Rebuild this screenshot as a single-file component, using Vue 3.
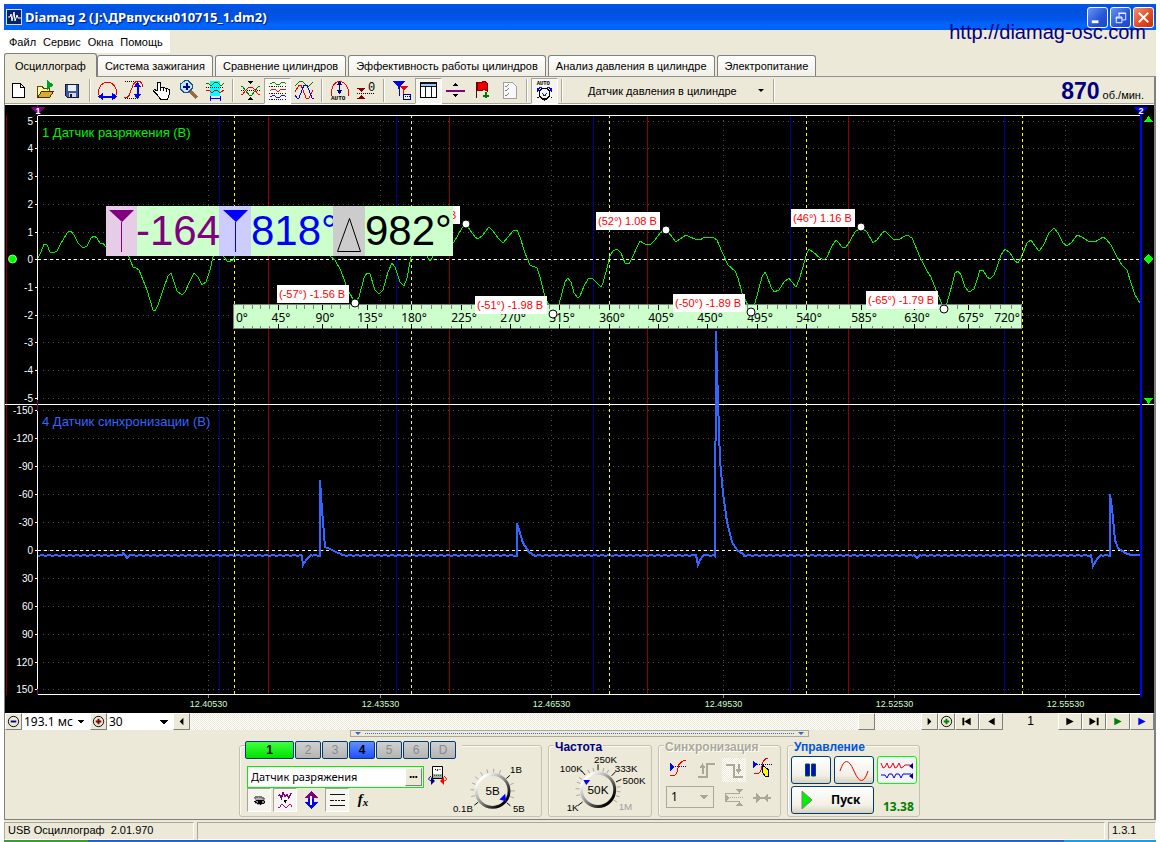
<script setup>
import { ref } from 'vue'

const menu = ['Файл', 'Сервис', 'Окна', 'Помощь']
const tabs = [
  'Осциллограф',
  'Система зажигания',
  'Сравнение цилиндров',
  'Эффективность работы цилиндров',
  'Анализ давления в цилиндре',
  'Электропитание',
]
const activeTab = ref(0)
const sensorName = ref('Датчик разряжения')

const R = '#f00000'
const B = '#0000f0'
const G = '#007800'
const K = '#000'
const M = '#800000'
const P = '#800080'
const s = (d, stroke, extra = {}) => ({ d, stroke, fill: 'none', ...extra })
const f = (d, fill, extra = {}) => ({ d, fill, ...extra })
const dots = { 'stroke-dasharray': '1 1' }

const icons = {
  new: [f('M7.500 5.500h8l4 4v10h-12z', '#fff', { stroke: K }), s('M15.500 5.500v4h4', K)],
  open: [
    f('M5.500 19.500v-11h5l1 2h6v3', '#fff7a0', { stroke: '#5a4a00' }),
    f('M5.500 19.500l4-6h12l-4 6z', '#e0a830', { stroke: '#3a3000' }),
    s('M15.500 4v8', K),
    f('M15 2l7 5-7 5z', '#00a020'),
  ],
  save: [
    f('M6.500 6.500h13v13h-11l-2-2z', '#3a5a9a', { stroke: '#101840' }),
    f('M9 7h8v6h-8z', '#e8f0ff'),
    f('M10 15h7v4h-7z', '#d8d8d8'),
    f('M11 16h2v3h-2z', '#101840'),
  ],
  widthFit: [
    s('M4.500 17v-4q1-7 8-9h2q7 2 8 9v4', R),
    s('M6 18.500h15', B, { 'stroke-width': 2 }),
    f('M4 18.500l5-4v8zM23 18.500l-5-4v8z', B),
  ],
  heightFit: [
    s('M4 3.500h12M4 20.500h12', K, dots),
    s('M3 20q5 0 6-5l3-8q2-4 6-4 3 1 4 6', R),
    s('M16.500 6v12', B, { 'stroke-width': 2 }),
    f('M16.500 4l4 5h-8zM16.500 21l4-5h-8z', B),
  ],
  hand: [
    f('M9.500 12V4.500h3V10q1-2 3 0 1-1 3 1 1-1 3 1v4l-2 5h-7l-4-5-3-3q0-2 2-1z', '#fff', { stroke: K }),
    s('M12.500 10v3M15.500 10v3M18.500 11v3', K),
  ],
  zoom: [
    s('M15 13l7 7', '#9a6a40', { 'stroke-width': 3 }),
    f('M10 2.500h3l4 4v4l-4 4h-4l-4-4v-4z', '#b8e8ff', { stroke: '#205080' }),
    s('M8 8.500h7M11.500 5v7', '#000080', { 'stroke-width': 2 }),
  ],
  span: [
    f('M8 3h10v15h-10z', '#00ffff'),
    s('M4 5h2l2 2h2l3-3h2l3 3h2l2-2', G),
    s('M4 9.500h18', K, dots),
    s('M4 12h3l2 2h2l2-2h2l2 2h2l3-2', R),
    s('M9 20.500h9M8.500 18v5M18.500 18v5', B),
  ],
  cross: [
    s('M4 12.500h19', K, dots),
    s('M4 8l2 1 3 4 3 4h3l3-4 3-4 2-1', G),
    s('M4 17l2-1 3-4 3-3h3l3 3 3 4 2 1', R),
    f('M13.500 6l-3-3h6zM13.500 19l-3 3h6z', K),
  ],
  split: [
    s('M5 6l3-2h2l3 2h2l3-2h2l3 2', G),
    s('M4 8.500h19M4 15.500h19M4 22.500h19', K, dots),
    s('M5 13l3-2h2l3 2h2l3-2h2l3 2', R),
    s('M5 20l3-2h2l3 2h2l3-2h2l3 2', B),
  ],
  overlay: [
    s('M4 8l5-5h2l5 5h2l4-4', G),
    s('M4 14l4-7h2l5 13h3l4-8', R),
    s('M4 17l2 3h2l5-13h3l5 13h2', B),
  ],
  auto: [
    s('M5.500 18v-5q1-7 7-10h2q7 3 8 10v5', R),
    s('M13.500 5v9', '#000080'),
    f('M13.500 3l3 4h-6zM13.500 16l3-4h-6z', '#000080'),
    { t: 'AUTO', x: 5, y: 22, size: 6, w: 'bold' },
  ],
  zero: [
    s('M4 15.500h18', K, dots),
    s('M4 10.500h8M4 20.500h8', M),
    f('M4 10h8l-4 4zM4 21h8l-4-4z', M),
    { t: '0', x: 15, y: 13, size: 12, w: 'normal' },
  ],
  cursors: [
    f('M4 3h13l-5 5v3h-2v-3z', B),
    s('M11.500 8v10', B),
    f('M11 8h9l-4 4z', R),
    s('M15.500 9v11', R),
    f('M15.500 16.500h7v5h-7z', '#e8f0ff', { stroke: '#000080' }),
    s('M17 18.500h5', '#000080', dots),
  ],
  table: [
    f('M4.500 4.500h18v15h-18z', '#fff', { stroke: K }),
    f('M5 5h17v3h-17z', '#a0c8ff'),
    s('M4 8.500h18M10.500 8v11M16.500 8v11M4.500 4v16h18v-16z', K),
  ],
  level: [s('M4 12.500h19', P, { 'stroke-width': 2 }), f('M13.500 5l3 3h-6zM13.500 19l3-3h-6z', K)],
  flag: [
    s('M7.500 4v16', '#600000', { 'stroke-width': 1 }),
    f('M8 4l4 1 3-2 3 2v8l-3-2-3 2-4-1z', '#f00000', { stroke: M }),
    s('M16.500 14v6M13.500 17.500h6', G, { 'stroke-width': 2 }),
  ],
  check: [
    f('M7.500 4.500h9l4 4v12h-13z', '#f8f8f8', { stroke: '#a0a0a0' }),
    s('M9 8l1 1 3-3M9 12l1 1 3-3M9 17l1 1 3-3', '#808080'),
  ],
  autoDial: [
    { t: 'AUTO', x: 5, y: 7, size: 6, w: 'bold' },
    s('M6 11q2-3 5-2M21 11q-2-3-5-2', B),
    f('M5 10h4l-3 4zM22 10h-4l3 4z', B),
    f('M11 10.500h5l3 3v5l-3 3h-5l-3-3v-5z', '#f4f4ff', { stroke: K, 'stroke-width': 1.5 }),
    s('M11 15l2 3h1l2-3', B),
    s('M7 20l-2 1M20 20l2 1M13.500 22v2', K),
  ],
}

const toolbar = [
  { n: 'new', l: 'Новый' }, { n: 'open', l: 'Открыть' }, { n: 'save', l: 'Сохранить' }, null,
  { n: 'widthFit', l: 'Ширина' }, { n: 'heightFit', l: 'Высота' }, { n: 'hand', l: 'Сдвиг' },
  { n: 'zoom', l: 'Увеличить' }, { n: 'span', l: 'Участок' }, null,
  { n: 'cross', l: 'Совместить нули' }, { n: 'split', l: 'Разделить', on: true }, { n: 'overlay', l: 'Наложить' }, null,
  { n: 'auto', l: 'Автомасштаб' }, { n: 'zero', l: 'Ноль' }, null,
  { n: 'cursors', l: 'Курсоры' }, { n: 'table', l: 'Таблица', on: true }, { n: 'level', l: 'Уровень' },
  { n: 'flag', l: 'Метка' }, { n: 'check', l: 'Список' }, null,
  { n: 'autoDial', l: 'Автодиапазон', on: true }, null,
]

// Plot geometry
const upperTicks = [5, 4, 3, 2, 1, 0, -1, -2, -3, -4, -5].map((v) => ({ v, y: Math.round(259.200 - v * 27.700) + 0.5 }))
const lowerTicks = [-150, -120, -90, -60, -30, 0, 30, 60, 90, 120, 150].map((v) => ({ v, y: Math.round(549.900 + v * 0.930) + 0.5 }))
const ticks = [...upperTicks, ...lowerTicks]
const times = [
  { x: 208.5, t: '12.40530' }, { x: 380.5, t: '12.43530' }, { x: 551.5, t: '12.46530' },
  { x: 723.5, t: '12.49530' }, { x: 894.5, t: '12.52530' }, { x: 1065.5, t: '12.55530' },
]
const blueMarks = [219.5, 396.5, 593.5, 790.5, 1004.5]
const redMarks = [268.5, 449.5, 647.5, 848.5]
const yellowMarks = [234.5, 411.5, 609.5, 806.5, 1022.5]

const vacuum = `38,258 41,252 44,244 47,245 50,252 53,253 57,251 60,245 67,233 69,231 71,231 74,235 78,243 83,248 87,246 91,238 94,236
97,238 100,243 103,243 105,246 120,246 129,257 133,267 136,268 139,270 147,290 153,310 155,311 158,305 163,290 168,276 171,273 174,282
177,291 182,295 185,292 189,283 194,273 198,277 202,285 206,282 210,270 213,257 217,245 221,248 224,257 228,262 233,260 238,250 325,250
331,257 335,260 341,271 348,290 355,303 359,297 364,278 367,273 370,274 375,290 379,294 383,290 388,272 392,263 395,267 400,282 404,286
407,278 411,257 415,245 424,250 428,258 430,261 432,258 436,250 450,247 454,242 458,235 462,228 466,224 470,230 475,237 478,239 483,235
489,227 493,231 498,238 503,243 508,237 513,231 517,230 520,237 525,253 530,265 537,268 540,277 545,297 553,314 559,304 562,293 565,282
568,278 571,282 574,293 578,298 580,296 584,286 588,279 592,278 597,283 601,287 603,283 607,268 610,256 613,251 617,249 621,253 625,263
629,264 633,256 637,247 640,241 643,243 647,245 651,244 655,240 660,233 666,229 672,237 676,242 680,239 686,235 690,237 695,239 700,240
705,237 713,237 717,240 722,252 728,265 735,271 738,278 742,293 751,312 755,303 758,292 762,277 765,272 767,276 771,287 774,292 779,290
784,282 789,278 792,282 796,287 799,280 803,267 807,253 809,249 813,252 820,258 824,260 827,257 832,246 836,240 839,243 842,247 846,247
850,241 855,232 861,227 867,232 873,243 877,240 882,233 885,231 888,234 893,239 899,240 903,237 907,235 912,238 915,245 920,257 927,271
931,277 936,290 944,309 947,303 952,285 955,273 958,271 961,275 965,287 969,292 974,289 977,280 980,270 983,270 987,277 990,279 994,275
997,267 1001,255 1005,249 1010,253 1015,261 1018,263 1021,258 1027,243 1031,240 1035,246 1039,251 1043,246 1049,233 1054,228 1058,233
1063,243 1067,246 1072,242 1077,235 1082,237 1088,241 1095,242 1103,237 1106,239 1111,245 1117,257 1122,265 1127,270 1131,283 1135,295 1140,303`

const pulses = [
  [[122, 555], [123, 553], [125, 555], [127, 558], [130, 555]],
  [[302, 556], [303, 565], [306, 560], [311, 555]],
  [[320, 556], [320, 480], [321, 496], [322, 510], [323, 522], [325, 547], [330, 549], [336, 552], [341, 554]],
  [[517, 556], [517, 523], [520, 533], [523, 543], [529, 552], [535, 556]],
  [[696, 555], [698, 565], [700, 560], [704, 555]],
  [[715, 556], [716, 331], [717, 369], [718, 400], [720, 460], [723, 493], [727, 522], [732, 542], [737, 550], [743, 554]],
  [[914, 555], [917, 558], [920, 555]],
  [[1091, 555], [1093, 566], [1097, 559], [1101, 555]],
  [[1110, 556], [1110, 494], [1112, 508], [1115, 540], [1118, 548], [1125, 553], [1131, 555]],
]
const sync = (() => {
  const out = []
  let x = 38
  for (const p of pulses) {
    for (; x < p[0][0]; x++) out.push([x, (x * x * 31) % 7 > 4 ? 555.5 : 555])
    out.push(...p)
    x = p[p.length - 1][0] + 1
  }
  for (; x <= 1140; x++) out.push([x, 555])
  return out.map((p) => p.join(',')).join(' ')
})()

const rulerX = [234, 278, 322, 367, 411, 461, 510, 559, 609, 658, 707, 757, 806, 861, 914, 968, 1022]
const rulerLabels = rulerX.map((x, i) => ({
  t: i * 45 + '°',
  x: i === 0 ? 242 : i === 16 ? 1007 : x + 3,
}))
const rulerMajor = rulerX.slice(1, 16).map((x) => `M${x + 0.5} 305v5M${x + 0.5} 324v5`).join('')
const rulerMinor = rulerX.slice(0, 16).map((x, i) =>
  [1, 2, 3, 4].map((k) => {
    const mx = Math.round(x + ((rulerX[i + 1] - x) * k) / 5) + 0.5
    return `M${mx} 305v4M${mx} 326v3`
  }).join('')).join('')

const callouts = [
  { x: 277, y: 285, w: 72, t: '(-57°) -1.56 В' },
  { x: 475, y: 296, w: 72, t: '(-51°) -1.98 В' },
  { x: 596, y: 212, w: 64, t: '(52°) 1.08 В' },
  { x: 673, y: 294, w: 72, t: '(-50°) -1.89 В' },
  { x: 791, y: 209, w: 64, t: '(46°) 1.16 В' },
  { x: 866, y: 291, w: 72, t: '(-65°) -1.79 В' },
]
const points = [[355, 303], [466, 224], [553, 314], [666, 230], [751, 312], [861, 227], [944, 309]]

const nav = [
  { l: 'В начало', d: 'M7 4h2v8h-2zM16 4v8l-7-4z', c: K },
  { l: 'Назад', d: 'M16 4v8l-7-4z', c: K },
]
const nav2 = [
  { l: 'Вперёд', d: 'M8 4v8l8-4z', c: K },
  { l: 'В конец', d: 'M7 4v8l7-4zM15 4h2v8h-2z', c: K },
  { l: 'Воспроизвести', d: 'M8 4v8l8-4z', c: '#008000' },
  { l: 'Следить', d: 'M8 4v8l8-4z', c: '#0000ff' },
]
const channels = ['1', '2', '3', '4', '5', '6', 'D']

const ray = (cx, cy, a, r1, r2) => {
  const t = (a * Math.PI) / 180
  return `M${cx + r1 * Math.cos(t)} ${cy + r1 * Math.sin(t)}L${cx + r2 * Math.cos(t)} ${cy + r2 * Math.sin(t)}`
}
const rangeTicks = [165, 183, 201, 219, 237, 255, 273, 291, 340, 0, 18].map((a) => ray(42, 34, a, 19, 23)).join('')
const rangeMain = [142, 318, 40].map((a) => ray(42, 34, a, 19, 24)).join('')
const freqTicks = [165, 183, 200, 213, 243, 257, 285, 298, 352, 5, 18, 33].map((a) => ray(50, 40, a, 19, 23)).join('')
const freqMain = [142, 229, 270, 314, 336].map((a) => ray(50, 40, a, 20, 26)).join('')
</script>

<template>
  <main class="window">
    <header class="titlebar">
      <svg class="logo" viewBox="0 0 16 16" aria-hidden="true">
        <rect x="0.5" y="0.5" width="15" height="15" fill="#082070" stroke="#d0e0ff" />
        <path d="M2 8h2l1-3 1 7 2-9 1 9 2-6 1 3h3" fill="none" stroke="#fff" />
      </svg>
      <h1>Diamag 2 (J:\ДРвпускн010715_1.dm2)</h1>
      <button class="sys" aria-label="Свернуть"><svg viewBox="0 0 20 20"><path d="M4 13h7v3h-7z" fill="#fff" /></svg></button>
      <button class="sys" aria-label="Восстановить"><svg viewBox="0 0 20 20"><path d="M8.500 9V5.500h7v7H12M7.500 5.500h8M5.500 9.500h6v6h-6zM5 10.500h7" fill="none" stroke="#fff" /></svg></button>
      <button class="sys close" aria-label="Закрыть"><svg viewBox="0 0 20 20"><path d="M5 5l10 10M15 5L5 15" stroke="#fff" stroke-width="2" /></svg></button>
    </header>
    <a class="site" href="http://diamag-osc.com">http://diamag-osc.com</a>
    <nav class="menu">
      <button v-for="m in menu" :key="m">{{ m }}</button>
    </nav>
    <div class="tabs" role="tablist">
      <button v-for="(t, i) in tabs" :key="t" role="tab" :aria-selected="i === activeTab" :class="{ active: i === activeTab }" @click="activeTab = i">{{ t }}</button>
    </div>

    <section class="page">
      <div class="toolbar">
        <template v-for="(b, i) in toolbar" :key="i">
          <button v-if="b" class="tool" :class="{ on: b.on }" :aria-label="b.l">
            <svg viewBox="0 0 27 26">
              <template v-for="(p, j) in icons[b.n]" :key="j">
                <text v-if="p.t" :x="p.x" :y="p.y" :font-size="p.size" :font-weight="p.w">{{ p.t }}</text>
                <path v-else v-bind="p" />
              </template>
            </svg>
          </button>
          <i v-else class="sep"></i>
        </template>
        <button class="sensor">Датчик давления в цилиндре<i class="caret"></i></button>
        <i class="sep"></i>
        <p class="rpm"><b>870</b> об./мин.</p>
      </div>

      <svg class="plot" viewBox="5 105 1149 608" role="img" aria-label="Осциллограмма">
        <rect x="5" y="105" width="1149" height="608" fill="#000" />
        <g class="crisp">
          <path v-for="t in ticks" :key="'h' + t.y" :d="`M43 ${t.y}H1138`" class="grid" />
          <path v-for="t in times" :key="'v' + t.x" :d="`M${t.x} 120V692`" class="grid" />
          <path v-for="x in blueMarks" :key="'b' + x" :d="`M${x} 116V694`" stroke="#000090" />
          <path v-for="x in redMarks" :key="'r' + x" :d="`M${x} 116V694`" stroke="#900000" />
          <path d="M6.500 115V695" stroke="#800000" />
          <path d="M38 259.500H1139M38 550.500H1139" stroke="#fff" stroke-dasharray="3 3" />
          <path d="M37.500 115V695M38 115.500H1140M5 404.500H1154M38 694.500H1140" stroke="#fff" />
          <path v-for="t in ticks" :key="'k' + t.y" :d="`M35 ${t.y}h3`" stroke="#fff" />
          <path v-for="t in times" :key="'m' + t.x" :d="`M${t.x} 695v3`" stroke="#888" />
          <path d="M37.500 105V116M37.500 400V411M37.500 689V695" stroke="#800080" />
          <polyline :points="vacuum" class="trace" stroke="#00f000" />
          <polyline :points="sync" class="trace" stroke="#3366ff" stroke-width="2" />
          <path v-for="x in yellowMarks" :key="'y' + x" :d="`M${x} 115V694`" stroke="#ffff00" stroke-dasharray="3 3" />
          <path d="M1140.500 107V697" stroke="#0000ff" stroke-width="2" />
          <path d="M30 107h15l-7 8z" fill="#800080" />
          <path d="M1133 107h15l-7 8z" fill="#0000ff" />
          <path d="M1144 122h9l-4.500-6zM1144 398h9l-4.500 6zM1148.500 254l5 5-5 5-5-5z" fill="#00ff00" />
        </g>
        <circle cx="12.500" cy="259" r="4" fill="#00ff00" stroke="#8f8" />
        <text class="mark" x="38" y="114">1</text>
        <text class="mark" x="1141" y="114">2</text>
        <text v-for="t in ticks" :key="'t' + t.y" x="33" :y="t.y + 3" class="ylabel">{{ t.v }}</text>
        <text v-for="t in times" :key="t.t" :x="t.x" y="707" class="xlabel">{{ t.t }}</text>
        <text x="42" y="137" class="name" fill="#00f000">1 Датчик разряжения (В)</text>
        <text x="42" y="426" class="name" fill="#3366ff">4 Датчик синхронизации (В)</text>

        <g class="crisp">
          <rect x="233.500" y="304.500" width="788" height="24" fill="#ccffcc" stroke="#808080" />
          <path :d="rulerMinor" stroke="#808080" />
          <path :d="rulerMajor" stroke="#000" />
        </g>
        <text v-for="r in rulerLabels" :key="r.t" :x="r.x" y="322" class="deg">{{ r.t }}</text>

        <rect x="440" y="206" width="20" height="18" fill="#fff" />
        <text x="449" y="219" class="call">В</text>
        <g v-for="c in callouts" :key="c.t">
          <rect :x="c.x" :y="c.y" :width="c.w" height="18" fill="#fff" />
          <text :x="c.x + 2" :y="c.y + 13" class="call">{{ c.t }}</text>
        </g>
        <circle v-for="p in points" :key="p[0]" :cx="p[0]" :cy="p[1]" r="4" fill="#fff" stroke="#000" />

        <rect x="106" y="206" width="347" height="50" fill="#ccffcc" />
        <rect x="106" y="206" width="31" height="50" fill="#e6cce6" />
        <rect x="219" y="206" width="32" height="50" fill="#ccccff" />
        <path d="M109 210h25l-12 12zM121 222h1v30h-1z" fill="#800080" />
        <path d="M223 210h25l-12 12zM235 222h1v30h-1z" fill="#0000ff" />
        <text x="136" y="245" class="read" fill="#800080">-164</text>
        <text x="251" y="245" class="read" fill="#0000ff">818°</text>
        <rect x="333" y="206" width="32" height="50" fill="#cccccc" />
        <path d="M349.500 218.500l11 33h-23z" fill="none" stroke="#000" />
        <text x="365" y="245" class="read" fill="#000">982°</text>
      </svg>

      <div class="scroll">
        <button class="rb" aria-label="Сжать"><svg viewBox="0 0 16 16"><circle cx="8" cy="8" r="5.500" fill="none" stroke="#000" /><path d="M5 7h6v2H5z" fill="#000080" /></svg></button>
        <select class="span" aria-label="Длительность"><option>193.1 мс</option></select>
        <button class="rb" aria-label="Растянуть"><svg viewBox="0 0 16 16"><circle cx="8" cy="8" r="5.500" fill="none" stroke="#000" /><path d="M5 7h6v2H5zM7 5h2v6H7z" fill="#800000" /></svg></button>
        <select class="step" aria-label="Шаг"><option>30</option></select>
        <button class="rb" aria-label="Прокрутить влево"><svg viewBox="0 0 16 16"><path d="M10 4v8l-4-4z" /></svg></button>
        <div class="track"><button class="rb thumb" aria-label="Ползунок"></button></div>
        <button class="rb" aria-label="Прокрутить вправо"><svg viewBox="0 0 16 16"><path d="M6 4v8l4-4z" /></svg></button>
        <button class="rb" aria-label="Добавить"><svg viewBox="0 0 16 16"><circle cx="8" cy="8" r="5.500" fill="none" stroke="#000" /><path d="M5 7h6v2H5zM7 5h2v6H7z" fill="#008000" /></svg></button>
        <button v-for="n in nav" :key="n.l" class="rb wide" :aria-label="n.l"><svg viewBox="0 0 24 16"><path :d="n.d" :fill="n.c" /></svg></button>
        <span class="frame">1</span>
        <button v-for="n in nav2" :key="n.l" class="rb wide" :aria-label="n.l"><svg viewBox="0 0 24 16"><path :d="n.d" :fill="n.c" /></svg></button>
      </div>

      <div class="splitter"><i class="caret"></i><i class="line"></i><i class="caret"></i></div>

      <div class="controls">
        <section class="group channel">
          <div class="chans">
            <button v-for="c in channels" :key="c" :class="'ch' + c">{{ c }}</button>
          </div>
          <div class="cols">
            <div class="stack">
              <div class="line1">
                <div class="field">
                  <input v-model="sensorName" aria-label="Имя датчика" />
                  <button class="rb more" aria-label="Выбрать датчик"><svg viewBox="0 0 16 16"><path d="M4 7h2v2H4zM7 7h2v2H7zM10 7h2v2h-2z" /></svg></button>
                </div>
                <svg class="meter" viewBox="0 0 20 20"><path d="M4.500 0.500h10v12h-10z" fill="#fff" stroke="#000" /><path d="M5 8h9v4H5z" fill="#aaa" /><path d="M6 9.500h7" stroke="#008000" stroke-dasharray="1 1" /><path d="M7 4l1-1M9 5l1-2M12 3v1" stroke="#000" /><path d="M3 10q-5 4 1 5" fill="none" stroke="#000080" /><path d="M3 11l4 4-4 4z" fill="#000080" /><path d="M16 10q5 4 0 5" fill="none" stroke="red" /><path d="M16 11l-4 4 4 4z" fill="red" /></svg>
              </div>
              <div class="line2">
                <button class="mini on" aria-label="Показать"><svg viewBox="0 0 24 24"><path d="M7 10q5-4 11 0v6l-5 2-5-2z" fill="#aaa" /><path d="M7 10q5-4 11 1" fill="none" stroke="#777" stroke-width="2" /><path d="M7 14q5-4 12 0q-5 5-12 0z" fill="#888" stroke="#000" /><circle cx="13" cy="14" r="2.500" /></svg></button>
                <button class="mini on" aria-label="Инвертировать"><svg viewBox="0 0 24 24"><path d="M4 8l2-2 2 4 2-6 2 4 2-2 2 4 2-4 2-2" fill="none" stroke="#800080" stroke-width="1.500" /><path d="M10 12h5l-2.500 3z" /><path d="M4 20l2 0 2-3 2 0 2 3h2l2-3h2l2 3" fill="none" stroke="#800080" /></svg></button>
                <button class="mini" aria-label="Сдвинуть"><svg viewBox="0 0 24 24"><path d="M12 3l7 7h-4v3h-6v-3H5z" fill="#800080" /><path d="M12 21l7-7h-4v-3h-6v3H5z" fill="#0000ff" /><path d="M11 8h2v9h-2z" fill="#fff" /></svg></button>
                <button class="mini on" aria-label="Линии"><svg viewBox="0 0 24 24"><path d="M4 6.500h17M4 18.500h17" stroke="#000" /><path d="M4 12.500h17" stroke="#000" stroke-dasharray="2 1" /></svg></button>
                <button class="mini fx" aria-label="Функция">f<sub>x</sub></button>
              </div>
            </div>
            <svg class="dial range" viewBox="0 0 92 62">
              <path :d="rangeTicks" stroke="#a8a69a" /><path :d="rangeMain" stroke="#000" />
              <circle cx="42" cy="34" r="17" fill="#ece9d8" stroke="url(#rim)" stroke-width="3" />
              <path d="M55 37l1 8-7-2z" fill="#0000ff" />
              <text x="42" y="38" text-anchor="middle" font-size="12">5В</text>
              <text x="60" y="16">1В</text><text x="1" y="56">0.1В</text><text x="63" y="56">5В</text>
            </svg>
          </div>
        </section>

        <section class="group freq">
          <h2>Частота</h2>
          <svg class="dial" viewBox="0 0 104 66">
            <defs><linearGradient id="rim" x1="0" y1="0" x2="1" y2="1"><stop offset="0.150" stop-color="#fff" /><stop offset="0.500" stop-color="#888" /><stop offset="0.850" stop-color="#000" /></linearGradient></defs>
            <path :d="freqTicks" stroke="#a8a69a" /><path :d="freqMain" stroke="#000" />
            <circle cx="50" cy="40" r="17" fill="#ece9d8" stroke="url(#rim)" stroke-width="3" />
            <path d="M35 30h7l-4 5z" fill="#0000ff" />
            <text x="50" y="44" text-anchor="middle" font-size="12">50K</text>
            <text x="46" y="13">250K</text><text x="11" y="22">100K</text><text x="67" y="22">333K</text>
            <text x="75" y="34">500K</text><text x="18" y="62">1K</text><text x="71" y="61" fill="#a0a0a0">1M</text>
          </svg>
        </section>

        <section class="group syncg">
          <h2>Синхронизация</h2>
          <div class="srow">
            <button class="mini" aria-label="Уровень"><svg viewBox="0 0 24 24"><path d="M5 8.500h16" stroke="#000080" stroke-dasharray="1 1" /><path d="M4 17l3 1q4-1 5-8t8-8" fill="none" stroke="#f00000" /><path d="M4 5v8l5-4z" fill="#0000ff" /></svg></button>
            <button class="mini" aria-label="Фронт"><svg viewBox="0 0 24 24"><path d="M5 19.500h8.500V6.500h8" fill="none" stroke="#fff" /><path d="M4 18.500h8.500V5.500h8" fill="none" stroke="#aca899" stroke-width="2" /><path d="M8.500 9v7" stroke="#aca899" stroke-width="2" /><path d="M8.500 5l3 5h-6z" fill="#aca899" /></svg></button>
            <button class="mini hatched" aria-label="Спад"><svg viewBox="0 0 24 24"><path d="M4 6.500h7.500v12h9" fill="none" stroke="#aca899" stroke-width="2" /><path d="M16.500 6v7" stroke="#aca899" stroke-width="2" /><path d="M16.500 16l3-5h-6z" fill="#aca899" /></svg></button>
            <button class="mini" aria-label="Захват"><svg viewBox="0 0 24 24"><path d="M3 6.500h19" stroke="#000080" stroke-dasharray="1 1" /><path d="M4 15l3 1q4-1 5-8t6-8" fill="none" stroke="#f00000" /><path d="M3 3v7l5-4z" fill="#0000ff" /><path d="M12 7l7 5-1 2 1 4-3 1-3-4-1-1z" fill="#ffff00" stroke="#000" /></svg></button>
          </div>
          <div class="srow">
            <select aria-label="Канал синхронизации" disabled><option>1</option></select>
            <button class="mini" aria-label="Диапазон"><svg viewBox="0 0 24 24"><path d="M3 7.500h15M3 15.500h15" stroke="#aca899" /><path d="M6 11.500h15" stroke="#aca899" stroke-dasharray="1 1" /><path d="M3 8l5 4-5 4zM13 3h8l-4 4zM13 20h8l-4-4z" fill="#aca899" /></svg></button>
            <button class="mini" aria-label="Сжать развёртку"><svg viewBox="0 0 24 24"><path d="M3 12h18" stroke="#aca899" stroke-width="2" /><path d="M6 7l5 5-5 5zM18 7l-5 5 5 5z" fill="#aca899" /></svg></button>
          </div>
        </section>

        <section class="group run">
          <h2>Управление</h2>
          <div class="rungrid">
            <button class="xp" aria-label="Пауза"><svg viewBox="0 0 38 26"><path d="M13.500 7h4v12h-4zM19.500 7h4v12h-4z" fill="#0000ff" stroke="#006000" /></svg></button>
            <button class="xp" aria-label="Одиночный"><svg viewBox="0 0 38 26"><path d="M5 14q6-19 14 0t14 0" fill="none" stroke="#f00000" /></svg></button>
            <button class="xp live" aria-label="Непрерывный"><svg viewBox="0 0 38 26"><path d="M3 6l2 5 2-1 2-4 2 5 2-1 2-4 2 5 2-1 2-4 2 5 2-1 2-2h5" fill="none" stroke="#f00000" /><path d="M3 18l4 0 2 3 2-4 3 0 2 4 2-4 3 0 2 4 2-4h8" fill="none" stroke="#0000e0" /><path d="M35 6v6l-4-3zM35 16v6l-4-3z" fill="#000080" /></svg></button>
            <button class="xp start"><svg viewBox="0 0 12 20"><path d="M1 1l10 9-10 9z" fill="#00f000" stroke="#808080" /></svg>Пуск</button>
            <output>13.38</output>
          </div>
        </section>
      </div>
    </section>

    <footer class="status">
      <span class="dev">USB Осциллограф&nbsp; 2.01.970</span>
      <span class="mid"></span>
      <span class="ver">1.3.1</span>
    </footer>
    <div class="taskbar"><i class="go"></i><i class="tray"></i></div>
  </main>
</template>

<style>
body { background: #fff; }
</style>

<style scoped>
* { box-sizing: border-box; }
.window {
  position: relative;
  display: flex;
  flex-direction: column;
  padding: 4px 4px 0;
  font: 11px/14px "Liberation Sans", Arial, sans-serif;
  color: #000;
}
button { font: inherit; color: inherit; padding: 0; border: 0; background: none; }
h1, h2, p { margin: 0; }
svg { display: block; }
.titlebar {
  display: flex;
  align-items: center;
  gap: 2px;
  height: 26px;
  padding: 0 2px;
  background: linear-gradient(#0058ee 0, #0050dc 25%, #0055e8 60%, #0066ff 80%, #0060f8 100%);
}
.logo { width: 16px; height: 16px; }
.titlebar h1 { flex: 1; margin-left: 1px; font: bold 13px/20px "Noto Sans", sans-serif; color: #fff; text-shadow: 1px 1px 1px #001a70; }
.sys { width: 21px; height: 21px; border: 1px solid #fff; border-radius: 3px; background: linear-gradient(135deg, #6a94f0, #2454d8 60%, #1c48c8); }
.sys.close { background: linear-gradient(135deg, #f09070, #e04820 60%, #c03010); }
.site { position: absolute; top: 20px; right: 14px; font: 20px/24px "Liberation Sans", sans-serif; color: #000080; text-decoration: none; }
.menu { display: flex; height: 23px; background: linear-gradient(90deg, #fff 166px, #ece9d8 166px); padding-left: 5px; gap: 7px; }
.tabs { display: flex; align-items: flex-end; gap: 2px; height: 24px; background: #ece9d8; border-bottom: 1px solid #919191; }
.tabs button { height: 21px; padding: 0 7px; border: 1px solid #808080; border-bottom: 0; border-radius: 3px 3px 0 0; background: linear-gradient(#fff, #f0efe6); white-space: nowrap; }
.tabs .active { height: 24px; margin-right: -2px; margin-bottom: -1px; padding: 0 10px; background: #ece9d8; }
.page { border-left: 1px solid #808080; border-right: 2px solid #808080; border-bottom: 1px solid #808080; background: #ece9d8; }
.toolbar { display: flex; align-items: center; height: 28px; border-bottom: 1px solid #fff; box-shadow: inset 0 -1px #a8a598; }
.tool { width: 27px; height: 26px; }
.tool svg { width: 100%; height: 100%; shape-rendering: crispEdges; font-family: "Liberation Mono", monospace; }
.tool.on, .mini.on { background: #f6f5ef; border: 1px solid; border-color: #a8a598 #fff #fff #a8a598; }
.sep { width: 2px; height: 23px; margin: 0 3px; border-left: 1px solid #aca899; border-right: 1px solid #fff; flex: none; }
.caret { display: inline-block; border: 3px solid transparent; border-top-color: #000; border-bottom: 0; }
.sensor { display: flex; align-items: center; gap: 21px; padding: 0 6px 0 22px; height: 24px; white-space: nowrap; }
.rpm { margin-left: auto; padding-right: 10px; white-space: nowrap; }
.rpm b { font: bold 23px/26px "Liberation Sans", sans-serif; color: #000080; }
.plot { width: 100%; height: auto; font-family: "Liberation Sans", sans-serif; }
.crisp { shape-rendering: crispEdges; }
.grid { stroke: #505050; stroke-dasharray: 1 4; }
.trace { fill: none; }
.mark { font-size: 9px; font-weight: bold; fill: #fff; text-anchor: middle; }
.ylabel { font-size: 10px; fill: #fff; text-anchor: end; }
.xlabel { font-size: 9px; fill: #ccffcc; text-anchor: middle; }
.name { font-size: 13px; }
.deg { font-size: 12px; text-anchor: middle; font-family: "Noto Sans", sans-serif; }
.call { font-size: 11px; fill: #ff0000; }
.read { font-size: 42px; }
.scroll { display: flex; height: 17px; }
.rb { flex: none; width: 17px; height: 17px; background: #ece9d8; border: 1px solid; border-color: #fff #808080 #808080 #fff; }
.rb svg { width: 100%; height: 100%; }
.rb.wide { width: 24px; }
select {
  appearance: none;
  margin: 0;
  border: 0;
  border-radius: 0;
  color: #000;
  font: 12px/16px "Noto Sans", sans-serif;
  padding: 0 2px;
}
.scroll select { background: linear-gradient(45deg, transparent 50%, #000 50%) no-repeat right 9px center / 4px 4px, linear-gradient(315deg, transparent 50%, #000 50%) no-repeat right 5px center / 4px 4px, #fff; }
.span { width: 68px; }
.step { width: 66px; }
.track { flex: 1; display: flex; justify-content: flex-end; padding-right: 46px; background: repeating-conic-gradient(#ece9d8 0 25%, #fff 0 50%) 0 0 / 2px 2px; }
.frame { width: 55px; text-align: center; font-size: 12px; line-height: 17px; }
.splitter { display: flex; align-items: center; gap: 4px; width: 40%; height: 7px; margin: 0 auto; padding: 0 4px; border: 1px solid #aca899; }
.splitter .caret { border-top-color: #316ac5; }
.splitter .line { flex: 1; border-top: 1px dotted #316ac5; }
.controls { display: flex; justify-content: center; gap: 6px; padding: 8px 0 2px; }
.group { height: 72px; border: 1px solid #c4c1b0; border-radius: 3px; box-shadow: inset 1px 1px #faf9f3; }
.group h2 { width: max-content; margin: -6px 0 0 5px; padding: 0 1px; background: #ece9d8; font: bold 12px/14px "Liberation Sans", sans-serif; white-space: nowrap; }
.channel { width: 303px; }
.freq { width: 104px; }
.freq h2 { color: #000080; }
.syncg { width: 123px; }
.syncg h2 { color: #aca899; text-shadow: 1px 1px #fff; }
.run { width: 133px; }
.run h2 { color: #0054e3; }
.chans { display: flex; gap: 1px; width: max-content; margin: -5px 0 0 5px; padding-right: 6px; background: #ece9d8; }
.chans button { width: 26px; height: 18px; border: 1px solid #003c74; border-radius: 2px; background: linear-gradient(#d0d0d0, #b4b4b4); color: #8c8c8c; font-size: 12px; }
.chans .ch1 { width: 49px; background: linear-gradient(#40ff40, #00e000); color: #000; font-weight: bold; }
.chans .ch4 { background: linear-gradient(#6090ff, #2050ff); color: #000; font-weight: bold; }
.cols { display: flex; }
.stack { width: 208px; padding: 7px 0 0 7px; }
.line1 { display: flex; gap: 4px; }
.field { display: flex; width: 177px; height: 22px; padding: 1px; border: 1px solid #00f000; background: #fff; }
.field input { flex: 1; min-width: 0; border: 0; padding: 0 2px; background: none; font: 11px/16px "Noto Sans", sans-serif; outline: 0; }
.more { height: 18px; }
.meter { width: 20px; height: 20px; }
.line2 { display: flex; gap: 2px; }
.mini { flex: none; width: 24px; height: 24px; }
.mini svg { width: 100%; height: 100%; shape-rendering: crispEdges; }
.fx { font: italic bold 15px/20px "Liberation Serif", serif; }
.fx sub { font-size: 11px; vertical-align: -2px; }
.dial { font-size: 10px; }
.range { width: 92px; height: 62px; margin: -2px 0 0 4px; }
.freq .dial { width: 100%; height: 66px; margin-top: -4px; }
.srow { display: flex; gap: 4px; padding: 4px 0 0 7px; }
.srow select { flex: none; width: 48px; height: 22px; margin-right: 4px; padding-left: 4px; border: 1px solid #aca899; opacity: 1; background: linear-gradient(45deg, transparent 50%, #aca899 50%) no-repeat right 9px center / 4px 4px, linear-gradient(315deg, transparent 50%, #aca899 50%) no-repeat right 5px center / 4px 4px, #ece9d8; }
.hatched { background: repeating-conic-gradient(#ece9d8 0 25%, #fff 0 50%) 0 0 / 2px 2px; }
.rungrid { display: grid; grid-template-columns: 40px 40px 40px; gap: 2px 3px; padding: 2px 0 0 3px; }
.xp { height: 28px; border: 1px solid #003c74; border-radius: 3px; background: linear-gradient(#fff, #f2f0e6 70%, #d8d2bc); }
.xp svg { width: 100%; height: 100%; }
.xp.live { border: 1px solid #00ff00; background: #f4f3fa; }
.start { grid-column: span 2; display: flex; align-items: center; gap: 18px; padding-left: 9px; font: bold 12px/16px "Noto Sans", sans-serif; }
.start svg { width: 12px; height: 20px; }
.rungrid output { align-self: end; padding-left: 6px; font: bold 12px/15px "Noto Sans", sans-serif; color: #008000; }
.status { display: flex; gap: 3px; height: 20px; padding-top: 2px; background: #ece9d8; }
.status span { padding: 0 3px; border: 1px solid; border-color: #aca899 #fff #fff #aca899; line-height: 15px; white-space: nowrap; }
.dev { width: 190px; }
.mid { flex: 1; }
.ver { width: 48px; }
.taskbar { display: flex; justify-content: space-between; height: 4px; background: linear-gradient(#1c58c8, #3c88f0); }
.go { width: 84px; background: #3c9a3c; }
.tray { width: 92px; background: #10a0f0; }
</style>
